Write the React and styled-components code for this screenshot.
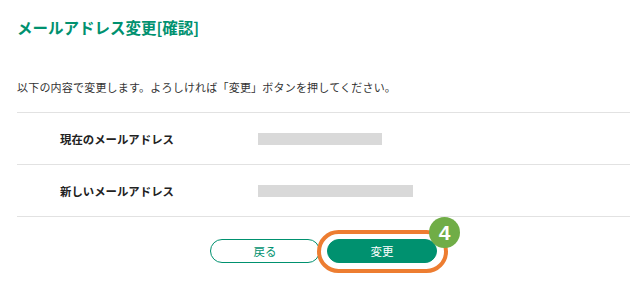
import React from "react";
import styled, { createGlobalStyle } from "styled-components";

const Global = createGlobalStyle`
  html, body { margin: 0; padding: 0; background: #fff; }
  body { font-family: "Noto Sans CJK JP", "Noto Sans", sans-serif; color: #333; }
`;

const Page = styled.div`
  min-height: 285px;
  box-sizing: border-box;
  padding: 17px 11px 24px 17px;
`;

const Title = styled.h1`
  margin: 0;
  font-size: 15.5px;
  line-height: 20px;
  font-weight: 700;
  color: #00916f;
`;

const Lead = styled.p`
  margin: 42px 0 0;
  font-size: 11px;
  letter-spacing: 0.2px;
  line-height: 16px;
  color: #333;
`;

const Table = styled.div`
  margin-top: 17px;
  border-bottom: 1px solid #e2e2e2;
`;

const Row = styled.div`
  display: grid;
  grid-template-columns: 198px 1fr;
  align-items: center;
  height: 51px;
  padding-left: 43px;
  border-top: 1px solid #e2e2e2;
`;

const Label = styled.div`
  font-size: 11.4px;
  font-weight: 700;
  color: #222;
`;

const Masked = styled.div`
  height: 12px;
  width: ${(p) => p.$w}px;
  background: #d9d9d9;
`;

const Actions = styled.div`
  margin-top: 22px;
  display: flex;
  justify-content: center;
  gap: 7px;
`;

const Button = styled.button`
  width: 110px;
  height: 24px;
  border-radius: 12px;
  font-family: inherit;
  font-size: 11.5px;
  padding: 0;
  cursor: pointer;
  border: 1px solid #00916f;
  background: ${(p) => (p.$primary ? "#00916f" : "#fff")};
  color: ${(p) => (p.$primary ? "#fff" : "#00916f")};
`;

const Highlight = styled.div`
  position: relative;
  display: flex;
`;

const Ring = styled.span`
  position: absolute;
  left: -10px;
  right: -11px;
  top: -9px;
  bottom: -10px;
  border: 4px solid #ed7d31;
  border-radius: 22px;
  pointer-events: none;
`;

const Badge = styled.span`
  position: absolute;
  left: 102px;
  top: -22px;
  width: 31px;
  height: 31px;
  border-radius: 50%;
  background: #70ad47;
  color: #fff;
  font-family: "Liberation Sans", Arial, sans-serif;
  font-weight: 700;
  font-size: 21px;
  line-height: 31px;
  text-align: center;
`;

export default function App() {
  return (
    <>
      <Global />
      <Page>
        <Title>メールアドレス変更[確認]</Title>
        <Lead>以下の内容で変更します。よろしければ「変更」ボタンを押してください。</Lead>
        <Table>
          <Row>
            <Label>現在のメールアドレス</Label>
            <Masked $w={124} />
          </Row>
          <Row>
            <Label>新しいメールアドレス</Label>
            <Masked $w={155} />
          </Row>
        </Table>
        <Actions>
          <Button>戻る</Button>
          <Highlight>
            <Button $primary>変更</Button>
            <Ring />
            <Badge>4</Badge>
          </Highlight>
        </Actions>
      </Page>
    </>
  );
}
